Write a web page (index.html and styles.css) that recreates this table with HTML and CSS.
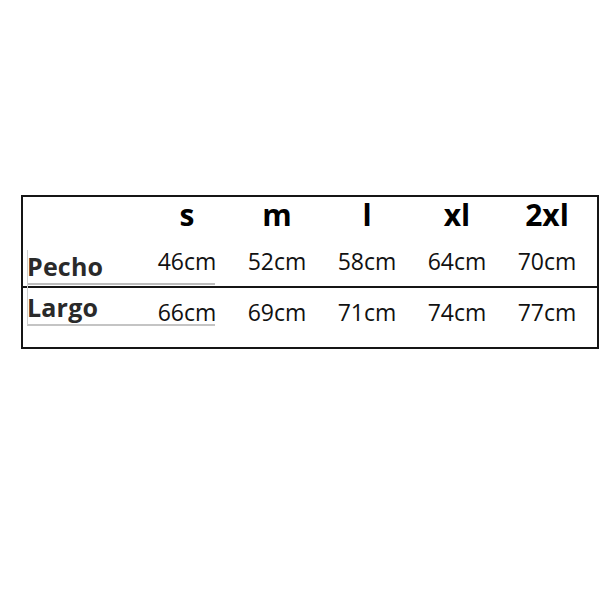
FILE: index.html
```html
<!DOCTYPE html>
<html lang="es">
<head>
<meta charset="utf-8">
<title>Tabla de tallas</title>
<link rel="stylesheet" href="styles.css">
</head>
<body>
<div class="chart">
  <div class="row head">
    <div class="label"></div>
    <div class="cell">s</div>
    <div class="cell">m</div>
    <div class="cell">l</div>
    <div class="cell">xl</div>
    <div class="cell">2xl</div>
  </div>
  <div class="row r1">
    <div class="label">Pecho</div>
    <div class="cell">46cm</div>
    <div class="cell">52cm</div>
    <div class="cell">58cm</div>
    <div class="cell">64cm</div>
    <div class="cell">70cm</div>
  </div>
  <div class="divider"></div>
  <div class="row r2">
    <div class="label">Largo</div>
    <div class="cell">66cm</div>
    <div class="cell">69cm</div>
    <div class="cell">71cm</div>
    <div class="cell">74cm</div>
    <div class="cell">77cm</div>
  </div>
  <div class="paste"></div>
</div>
</body>
</html>
```
FILE: styles.css
```css
html, body {
  margin: 0;
  padding: 0;
  background: #fff;
}
body {
  font-family: "Open Sans", "Liberation Sans", sans-serif;
  color: #111;
}
.chart {
  position: relative;
  box-sizing: border-box;
  margin: 195px 0 0 21px;
  width: 578px;
  height: 154px;
  border: 2px solid #151515;
}
.row {
  display: grid;
  grid-template-columns: 119px repeat(5, 90px);
  box-sizing: border-box;
}
.cell {
  text-align: center;
  white-space: nowrap;
}
.head {
  height: 46px;
}
.head .cell {
  font-size: 30px;
  font-weight: 700;
  line-height: 36px;
  color: #000;
}
.r1 {
  height: 43px;
}
.r2 {
  height: 59px;
}
.r1 .cell, .r2 .cell {
  font-size: 23px;
  line-height: 28px;
  color: #111;
}
.label {
  padding-left: 4px;
  font-size: 25px;
  font-weight: 700;
  line-height: 28px;
  color: #2a2a2a;
  letter-spacing: 0.2px;
  white-space: nowrap;
}
.r1 .cell { padding-top: 4px; }
.r1 .label { padding-top: 9px; }
.r2 .cell { padding-top: 10px; }
.r2 .label { padding-top: 5px; }
.divider {
  height: 2px;
  background: #151515;
}
.paste {
  position: absolute;
  left: 4px;
  top: 53px;
  width: 188px;
  height: 76px;
  box-sizing: border-box;
  border-left: 1px solid #cfcfcf;
  border-bottom: 2px solid #c4c4c4;
  pointer-events: none;
}
.paste::after {
  content: "";
  position: absolute;
  left: 0;
  right: 0;
  top: 33px;
  height: 2px;
  background: #bdbdbd;
}
```
